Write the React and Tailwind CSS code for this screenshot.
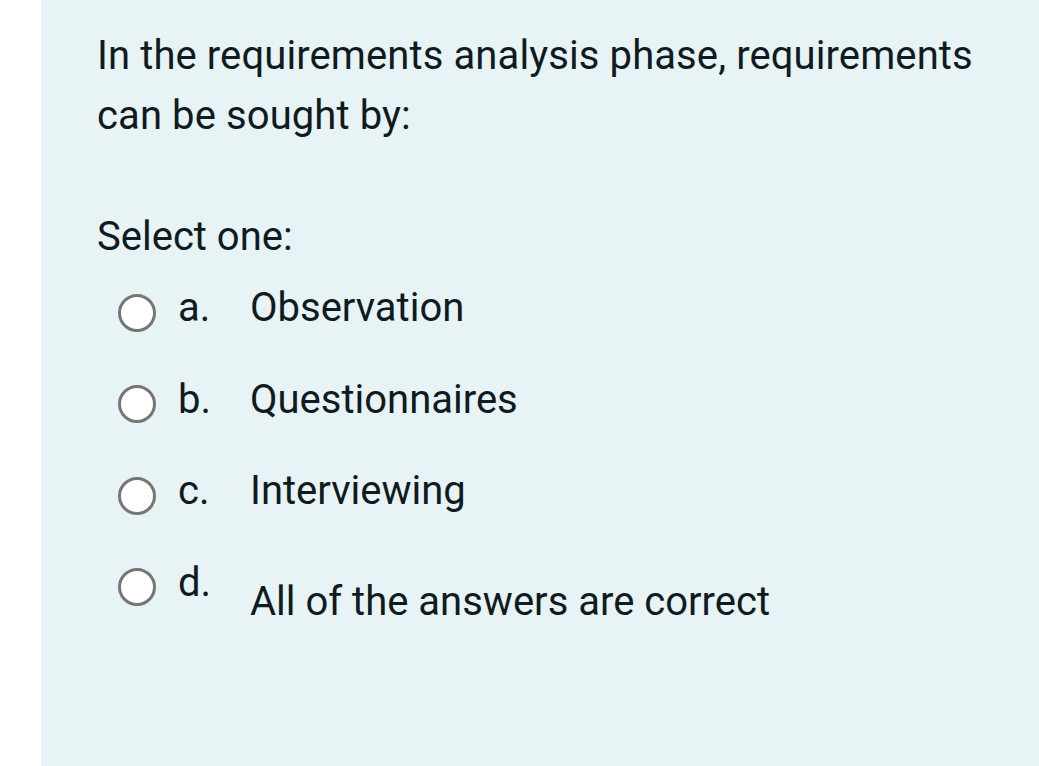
const options = [
  { letter: "a.", text: "Observation" },
  { letter: "b.", text: "Questionnaires" },
  { letter: "c.", text: "Interviewing" },
  { letter: "d.", text: "All of the answers are correct", low: true },
];

function Radio() {
  return <span className="w-[38px] h-[38px] shrink-0 rounded-full border-[3px] border-[#767676] bg-white" />;
}

export default function App() {
  return (
    <div
      className="flex min-h-[766px] bg-white text-[#0f1b1e]"
      style={{ fontFamily: "Roboto, 'Noto Sans', sans-serif" }}
    >
      <div className="w-[41px] shrink-0" />
      <div className="flex-1 bg-[#e7f3f5] pl-[56px] pt-[26px]">
        <p className="text-[40px] leading-[60px] tracking-[0.1px]">
          In the requirements analysis phase, requirements
          <br />
          can be sought by:
        </p>
        <p className="mt-[67px] text-[40px] leading-[48px]">Select one:</p>
        <div className="mt-[6px] pl-[21px]">
          {options.map((o) => (
            <div key={o.letter} className="flex h-[91.5px] items-center">
              <Radio />
              <span className="ml-[22px] w-[72px] shrink-0 pb-[9px] text-[40px] leading-[48px]">{o.letter}</span>
              <span className={"text-[40px] leading-[48px] pb-[9px]" + (o.low ? " pt-[38px]" : "")}>{o.text}</span>
            </div>
          ))}
        </div>
      </div>
    </div>
  );
}
